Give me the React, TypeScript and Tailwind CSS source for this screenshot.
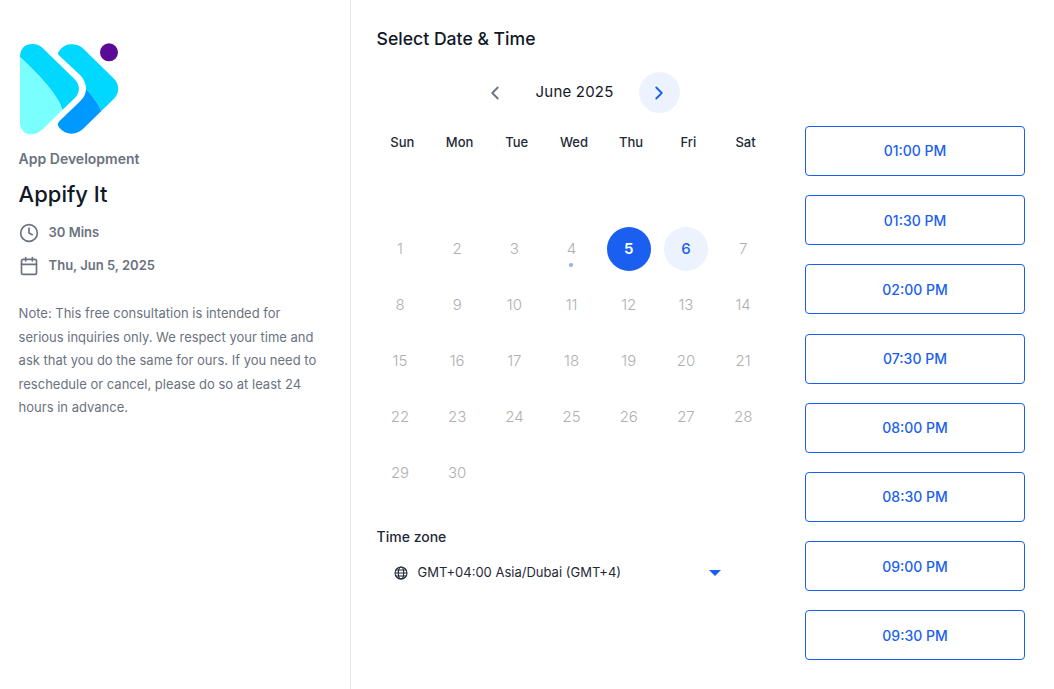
import { Calendar, ChevronLeft, ChevronRight, Clock } from "lucide-react";

const WEEKDAYS = ["Sun", "Mon", "Tue", "Wed", "Thu", "Fri", "Sat"];
const TIMES = ["01:00 PM", "01:30 PM", "02:00 PM", "07:30 PM", "08:00 PM", "08:30 PM", "09:00 PM", "09:30 PM"];
const DAYS = Array.from({ length: 30 }, (_, i) => i + 1);

function Logo() {
  return (
    <svg viewBox="57 66 300 282" className="w-[100px] h-[94px] block ml-[0.4px]">
      <path d="M60 112C60 85 75 72 97 72C110 72 120 76 128 84L224 178C241 195 241 218 224 235L187 270C180 235 120 165 60 112Z" fill="#00d8ff" />
      <path d="M60 112C120 165 180 235 187 270L132 324C118 338 105 343 95 343C73 343 60 328 60 308Z" fill="#7affff" />
      <path d="M179 91C190 76 205 72 218 73C232 74 242 78 251 87L342 176C359 193 359 220 342 236L304 273C295 250 275 225 258 206C258 190 250 175 240 165L179 108C172 102 173 97 179 91Z" fill="#00d8ff" />
      <path d="M258 206C275 225 295 250 304 273L252 324C240 336 228 341 215 341C200 341 188 334 178 323C172 316 172 310 178 304L238 246C250 234 258 222 258 206Z" fill="#0099ff" />
      <circle cx="327" cy="97" r="27" fill="#5b0a96" />
    </svg>
  );
}

function GlobeIcon() {
  return (
    <svg viewBox="0 0 14 14" fill="none" stroke="#1f2937" strokeWidth="1.1" className="w-[14px] h-[14px] shrink-0">
      <circle cx="7" cy="7" r="6" />
      <ellipse cx="7" cy="7" rx="2.7" ry="6" />
      <path d="M1 7H13M1.8 4H12.2M1.8 10H12.2" />
    </svg>
  );
}

function Sidebar() {
  return (
    <aside className="w-[351px] shrink-0 border-r border-[#e5e7eb] pt-[42px] pl-[18.6px] pr-[30px]">
      <Logo />
      <p className="mt-[13px] text-sm leading-[20px] font-semibold text-[#6b7280]">App Development</p>
      <h1 className="mt-[11px] text-[22px] leading-[28px] font-medium text-[#111827]">Appify It</h1>
      <div className="mt-[15px] flex items-center gap-[10px] h-[20px] text-[13px] font-semibold text-[#6b7280]">
        <Clock className="w-[20px] h-[20px]" strokeWidth={2} />
        <span>30 Mins</span>
      </div>
      <div className="mt-[13px] flex items-center gap-[10px] h-[20px] text-[13px] font-semibold text-[#6b7280]">
        <Calendar className="w-[20px] h-[20px]" strokeWidth={2} />
        <span>Thu, Jun 5, 2025</span>
      </div>
      <p className="mt-[26px] text-[13px] leading-[23.6px] text-[#6b7280]">
        Note: This free consultation is intended for serious inquiries only. We respect your time and ask that you do the same for ours. If you need to reschedule or cancel, please do so at least 24 hours in advance.
      </p>
    </aside>
  );
}

function CalendarGrid() {
  return (
    <div>
      <div className="flex items-center h-[41px] mt-[22px] pl-[108px]">
        <ChevronLeft className="w-[22px] h-[22px] text-[#6b7280] ml-[-0.4px]" strokeWidth={2} />
        <span className="ml-[29.4px] w-[78px] text-[15px] font-normal text-[#111827] tracking-[0.2px] whitespace-nowrap">June 2025</span>
        <span className="ml-[25px] w-[41px] h-[41px] rounded-full bg-[#edf3fe] flex items-center justify-center">
          <ChevronRight className="w-[22px] h-[22px] text-[#1a5ff0]" strokeWidth={2} />
        </span>
      </div>
      <div className="mt-[19px] ml-[-2.8px] grid grid-cols-[repeat(7,57.2px)] h-[20px]">
        {WEEKDAYS.map((d) => (
          <span key={d} className="text-center text-[13px] leading-[20px] font-medium text-[#1f2937]">{d}</span>
        ))}
      </div>
      <div className="mt-[69px] ml-[-5.2px] grid grid-cols-[repeat(7,57.2px)] auto-rows-[56px]">
        {DAYS.map((n) => (
          <div key={n} className="relative flex items-center justify-center">
            {n === 5 ? (
              <span className="w-[44px] h-[44px] rounded-full bg-[#1a5ff0] text-white font-semibold text-[15px] flex items-center justify-center">5</span>
            ) : n === 6 ? (
              <span className="w-[44px] h-[44px] rounded-full bg-[#edf3fe] text-[#1a5ff0] font-medium text-[15px] flex items-center justify-center">6</span>
            ) : (
              <span className="text-[15px] font-light text-[#b0b0b0]">{n}</span>
            )}
            {n === 4 && <span className="absolute left-[26px] top-[42px] w-[4px] h-[4px] rounded-full bg-[#8fb0f5]" />}
          </div>
        ))}
      </div>
    </div>
  );
}

export default function App() {
  return (
    <div className="flex h-[689px] w-[1054px] overflow-hidden bg-white font-['Inter',sans-serif]">
      <Sidebar />
      <main className="w-[454px] shrink-0 pl-[25.6px] pt-[28px]">
        <h2 className="text-[17.6px] leading-[22px] font-medium text-[#111827]">Select Date &amp; Time</h2>
        <CalendarGrid />
        <p className="mt-[26px] text-sm leading-[20px] font-medium text-[#1f2937]">Time zone</p>
        <div className="mt-[16px] flex items-center h-[20px] pl-[17px] w-[344px]">
          <GlobeIcon />
          <span className="ml-[10px] text-[13px] text-[#1f2937] whitespace-nowrap">GMT+04:00 Asia/Dubai (GMT+4)</span>
          <span className="ml-auto w-0 h-0 border-x-[6px] border-x-transparent border-t-[6px] border-t-[#1a5ff0]" />
        </div>
      </main>
      <div className="pt-[126px] flex flex-col gap-[19.2px]">
        {TIMES.map((t) => (
          <button key={t} className="w-[220px] h-[50px] pt-[0.8px] rounded border border-[#1a5ff0] text-sm font-medium text-[#1a5ff0] bg-white">
            {t}
          </button>
        ))}
      </div>
    </div>
  );
}
